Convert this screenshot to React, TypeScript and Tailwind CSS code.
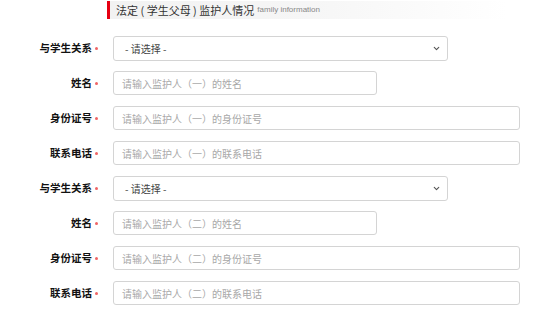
import { ChevronDown } from "lucide-react";

const font = { fontFamily: '"Noto Sans CJK SC", "Liberation Sans", sans-serif' };

type Field = { label: string; kind: "select" | "input"; width: string; placeholder?: string };

const guardian = (n: string): Field[] => [
  { label: "与学生关系", kind: "select", width: "w-[335px]" },
  { label: "姓名", kind: "input", width: "w-[264px]", placeholder: `请输入监护人（${n}）的姓名` },
  { label: "身份证号", kind: "input", width: "w-[407px]", placeholder: `请输入监护人（${n}）的身份证号` },
  { label: "联系电话", kind: "input", width: "w-[407px]", placeholder: `请输入监护人（${n}）的联系电话` },
];

const fields = [...guardian("一"), ...guardian("二")];

function Row({ f }: { f: Field }) {
  return (
    <div className="flex items-center h-[24px]">
      <div className="w-[98px] flex justify-end items-center text-[10.5px] font-bold text-[#111]">
        <span>{f.label}</span>
        <span className="ml-[3px] w-[3px] h-[3px] rounded-full bg-[#f06464]" />
      </div>
      <div className="w-[15px]" />
      {f.kind === "select" ? (
        <div
          className={`${f.width} h-[25px] flex items-center justify-between border border-[#d4d4d4] rounded-[3px] pl-[11px] pr-[6px] text-[10px] text-[#444]`}
        >
          <span>- 请选择 -</span>
          <ChevronDown size={9} strokeWidth={3} className="text-[#555]" />
        </div>
      ) : (
        <div
          className={`${f.width} h-[24px] flex items-center border border-[#d4d4d4] rounded-[3px] pl-[8px] text-[10px] text-[#a8a8a8]`}
        >
          {f.placeholder}
        </div>
      )}
    </div>
  );
}

export default function App() {
  return (
    <div className="w-[554px] h-[314px] bg-white overflow-hidden" style={font}>
      <div className="pt-[1px] pl-[107px]">
        <div className="h-[18px] w-[400px] flex items-center border-l-[3px] border-[#e60012] bg-gradient-to-r from-[#f2f2f2] via-[#f6f6f6] to-white pl-[6px]">
          <span className="text-[11px] text-[#333] whitespace-pre">法定 ( 学生父母 ) 监护人情况</span>
          <span className="ml-[3px] text-[8px] text-[#888]" style={{ fontFamily: '"Liberation Sans", sans-serif' }}>
            family information
          </span>
        </div>
      </div>
      <div className="mt-[17px] flex flex-col gap-[11px]">
        {fields.map((f, i) => (
          <Row key={i} f={f} />
        ))}
      </div>
    </div>
  );
}
